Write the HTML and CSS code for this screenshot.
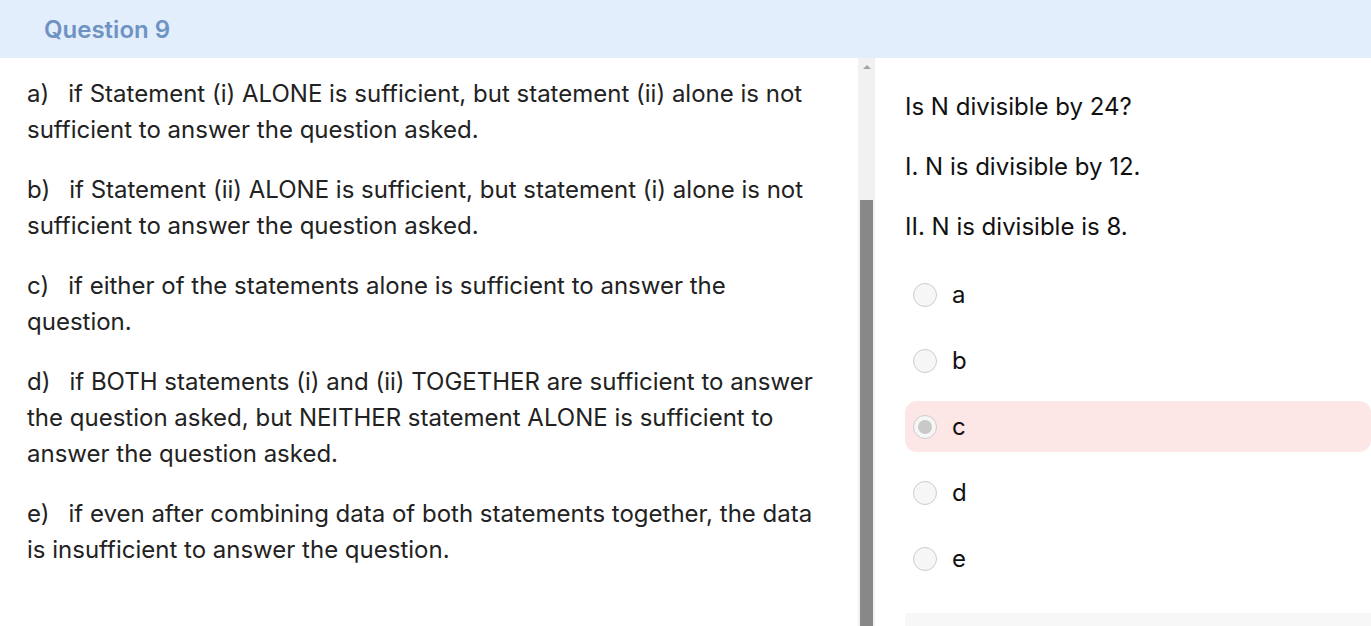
FILE: index.html
```html
<!DOCTYPE html>
<html>
<head>
  <meta charset="UTF-8">
  <title>Question 9</title>
  <link rel="stylesheet" href="styles.css">
</head>
<body>
  <div class="cabecera">Question 9</div>
  <div class="cuerpo">
    <div class="izquierda">
      <p><span class="letra">a)</span>if Statement (i) ALONE is sufficient, but statement (ii) alone is not sufficient to answer the question asked.</p>
      <p><span class="letra">b)</span>if Statement (ii) ALONE is sufficient, but statement (i) alone is not sufficient to answer the question asked.</p>
      <p><span class="letra">c)</span>if either of the statements alone is sufficient to answer the question.</p>
      <p><span class="letra">d)</span>if BOTH statements (i) and (ii) TOGETHER are sufficient to answer the question asked, but NEITHER statement ALONE is sufficient to answer the question asked.</p>
      <p><span class="letra">e)</span>if even after combining data of both statements together, the data is insufficient to answer the question.</p>
    </div>
    <!-- barra de desplazamiento del panel izquierdo -->
    <div class="barra">
      <div class="flecha"></div>
      <div class="pista"></div>
      <div class="pulgar"></div>
    </div>
    <div class="derecha">
      <p>Is N divisible by 24?</p>
      <p>I.&nbsp;N is divisible by 12.</p>
      <p>II.&nbsp;N is divisible is 8.</p>
      <div class="opciones">
        <label class="opcion"><span class="radio"></span>a</label>
        <label class="opcion"><span class="radio"></span>b</label>
        <label class="opcion marcada"><span class="radio"></span>c</label>
        <label class="opcion"><span class="radio"></span>d</label>
        <label class="opcion"><span class="radio"></span>e</label>
      </div>
      <div class="pie"></div>
    </div>
  </div>
</body>
</html>
```
FILE: styles.css
```css
:root {
  --cabecera-bg: #e3eefc;
  --cabecera-color: #6e93c2;
  --texto: #222222;
  --marcada-bg: #fde6e6;
}
body {
  font-family: Inter, 'Noto Sans', sans-serif;
  margin: 0;
  background: #ffffff;
  color: var(--texto);
  height: 626px;
  overflow: hidden;
}
.cabecera {
  height: 58px;
  background: var(--cabecera-bg);
  color: var(--cabecera-color);
  font-size: 24px;
  font-weight: 600;
  padding-left: 44px;
  display: flex;
  align-items: center;
}
.cuerpo {
  display: flex;
  height: 568px;
}
.izquierda {
  width: 795px;
  padding: 18px 36px 0 27px;
  font-size: 24px;
  line-height: 36px;
}
.izquierda p {
  margin: 0 0 24px;
}
.letra {
  margin-right: 19px;
}
.barra {
  width: 17px;
  background: #f1f1f1;
  display: flex;
  flex-direction: column;
  align-items: center;
}
.flecha {
  margin-top: 7px;
  width: 0;
  height: 0;
  border-left: 4px solid transparent;
  border-right: 4px solid transparent;
  border-bottom: 4px solid #a3a3a3;
}
.pista {
  height: 131px;
}
.pulgar {
  flex: 1;
  width: 13px;
  background: #888888;
}
.derecha {
  flex: 1;
  padding: 31px 0 0 30px;
  font-size: 24px;
  line-height: 36px;
  color: #111111;
}
.derecha p {
  margin: 0 0 24px;
}
.opciones {
  display: flex;
  flex-direction: column;
  gap: 15px;
}
.opcion {
  height: 51px;
  display: flex;
  align-items: center;
  padding-left: 8px;
  border-radius: 12px;
}
.opcion.marcada {
  background: var(--marcada-bg);
}
.radio {
  width: 22px;
  height: 22px;
  border: 1px solid #cccccc;
  border-radius: 50%;
  background: #f6f6f6;
  margin-right: 15px;
  position: relative;
}
.marcada .radio::after {
  content: "";
  position: absolute;
  top: 4px;
  left: 4px;
  width: 14px;
  height: 14px;
  border-radius: 50%;
  background: #c9c9c9;
}
.pie {
  margin-top: 29px;
  height: 40px;
  background: #f7f7f7;
}
```
